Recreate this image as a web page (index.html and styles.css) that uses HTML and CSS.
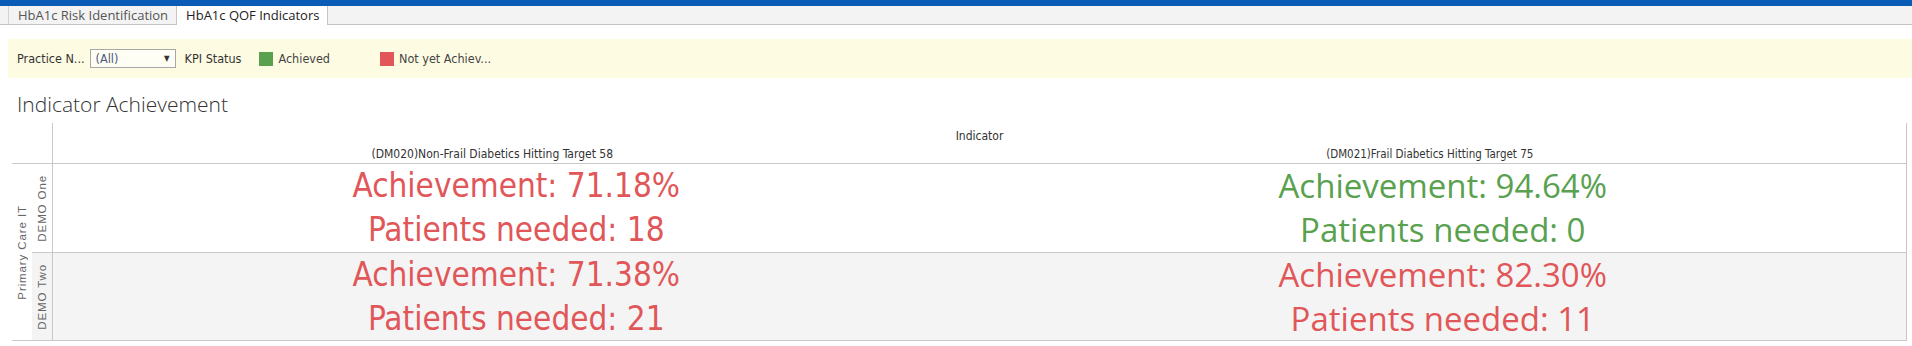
FILE: index.html
```html
<!DOCTYPE html>
<html lang="en">
<head>
    <meta charset="UTF-8">
    <title>HbA1c QOF Indicators</title>
    <link rel="stylesheet" href="styles.css">
</head>
<body>
    <div class="topbar"></div>

    <div class="tabs">
        <div class="tab">HbA1c Risk Identification</div>
        <div class="tab active">HbA1c QOF Indicators</div>
    </div>

    <div class="filters">
        <span class="filter-label">Practice N...</span>
        <div class="dropdown">
            <span>(All)</span>
            <span class="arrow">&#9660;</span>
        </div>
        <span class="filter-label kpi">KPI Status</span>
        <span class="swatch green"></span>
        <span class="legend-text">Achieved</span>
        <span class="swatch red"></span>
        <span class="legend-text">Not yet Achiev...</span>
    </div>

    <h1 class="title">Indicator Achievement</h1>

    <div class="crosstab">
        <div class="corner"></div>
        <div class="col-head">
            <div class="indicator">Indicator</div>
            <div class="col-names">
                <div class="left-name">(DM020)Non-Frail Diabetics Hitting Target 58</div>
                <div class="right-name">(DM021)Frail Diabetics Hitting Target 75</div>
            </div>
        </div>

        <div class="org"><span>Primary Care IT</span></div>

        <div class="practice"><span>DEMO One</span></div>
        <div class="cell narrow red-text">
            <div>Achievement: 71.18%</div>
            <div>Patients needed: 18</div>
        </div>
        <div class="cell green-text">
            <div>Achievement: 94.64%</div>
            <div>Patients needed: 0</div>
        </div>

        <div class="practice alt"><span>DEMO Two</span></div>
        <div class="cell alt narrow red-text">
            <div>Achievement: 71.38%</div>
            <div>Patients needed: 21</div>
        </div>
        <div class="cell alt red-text">
            <div>Achievement: 82.30%</div>
            <div>Patients needed: 11</div>
        </div>
    </div>
</body>
</html>
```

FILE: styles.css
```css
body {
    margin: 0;
    font-family: "Open Sans", Arial, sans-serif;
    background-color: white;
    color: #333;
}
.topbar {
    height: 6px;
    background-color: #0b5cb5;
}
.tabs {
    display: flex;
    height: 18px;
    padding-left: 8px;
    background-color: #f3f3f3;
    border-bottom: 1px solid #c4c4c4;
}
.tab {
    padding: 0 8px 0 9px;
    font-size: 13px;
    line-height: 18px;
    color: #555;
    border-left: 1px solid #d4d4d4;
}
.tab.active {
    color: #222;
    background-color: white;
    border-right: 1px solid #c4c4c4;
    border-left-color: #c4c4c4;
    height: 19px;
}
.filters {
    display: flex;
    align-items: center;
    height: 39px;
    margin: 14px 0 0 8px;
    padding-left: 9px;
    background-color: #fefbe3;
    font-family: "Liberation Sans Narrow", "DejaVu Sans Condensed", sans-serif;
    font-size: 12.5px;
    color: #333;
}
.dropdown {
    display: flex;
    align-items: center;
    justify-content: space-between;
    box-sizing: border-box;
    width: 86px;
    height: 19px;
    margin-left: 5px;
    padding: 0 5px 0 5px;
    border: 1px solid #a8a8a8;
    background-color: #fffef4;
    color: #4a5a7a;
}
.dropdown .arrow {
    font-size: 8px;
    color: #333;
}
.kpi {
    margin-left: 9px;
}
.swatch {
    width: 14px;
    height: 14px;
    margin: 0 5px 0 11px;
}
.swatch.green {
    margin-left: 18px;
    background-color: #59a14f;
}
.swatch.red {
    margin-left: 50px;
    background-color: #e15759;
}
.legend-text {
    color: #444;
}
.title {
    margin: 12px 0 0 17px;
    font-size: 21px;
    font-weight: 300;
    color: #333;
    line-height: 28px;
}
.crosstab {
    display: grid;
    grid-template-columns: 20px 21px 1fr 1fr;
    grid-template-rows: 41px 88px 88px;
    margin: 5px 5px 0 12px;
    border-right: 1px solid #c8c8c8;
    border-bottom: 1px solid #c8c8c8;
}
.corner {
    grid-column: 1 / 3;
    border-bottom: 1px solid #c8c8c8;
    border-right: 1px solid #c8c8c8;
}
.col-head {
    grid-column: 3 / 5;
    border-bottom: 1px solid #c8c8c8;
    font-family: "Liberation Sans Narrow", "DejaVu Sans Condensed", sans-serif;
    font-size: 12px;
    color: #333;
}
.indicator {
    text-align: center;
    margin-top: 4px;
    line-height: 18px;
}
.col-names {
    display: grid;
    grid-template-columns: 1fr 1fr;
    text-align: center;
    line-height: 18px;
}
.left-name {
    padding-right: 48px;
}
.right-name {
    padding-right: 26px;
    font-size: 11.5px;
}
.org {
    grid-column: 1;
    grid-row: 2 / 4;
    display: flex;
    align-items: center;
    justify-content: center;
}
.org span,
.practice span {
    writing-mode: vertical-rl;
    transform: rotate(180deg);
    font-family: "Liberation Sans", Arial, sans-serif;
    font-size: 11.5px;
    letter-spacing: 0.9px;
    color: #666;
}
.practice {
    display: flex;
    align-items: center;
    justify-content: center;
    border-right: 1px solid #c8c8c8;
}
.practice.alt {
    border-top: 1px solid #c8c8c8;
}
.alt {
    background-color: #f4f4f4;
}
.cell {
    display: flex;
    flex-direction: column;
    align-items: center;
    justify-content: center;
    font-size: 33px;
    line-height: 44px;
}
.cell.alt {
    border-top: 1px solid #c8c8c8;
}
.cell.narrow {
    font-family: "Liberation Sans Narrow", "DejaVu Sans Condensed", sans-serif;
    font-size: 33px;
}
.red-text {
    color: #e15759;
}
.green-text {
    color: #59a14f;
}
```
